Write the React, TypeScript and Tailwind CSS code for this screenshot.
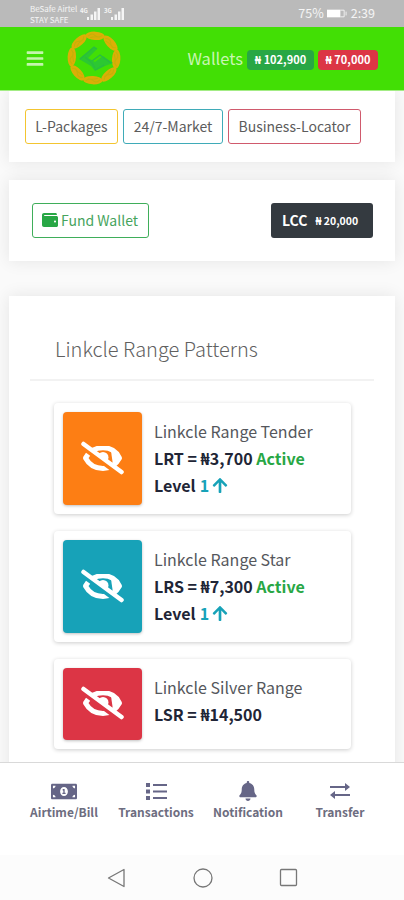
import type { ReactNode } from "react"
import { FaArrowUp, FaBars, FaBell, FaMoneyBillAlt, FaWallet } from "react-icons/fa"

const RANGES = [
  { name: "Linkcle Range Tender", code: "LRT", price: "3,700", level: 1, tile: "bg-[#fd7e14]" },
  { name: "Linkcle Range Star", code: "LRS", price: "7,300", level: 1, tile: "bg-[#17a2b8]" },
  { name: "Linkcle Silver Range", code: "LSR", price: "14,500", level: 0, tile: "bg-[#dc3545]" },
]

const CARD = "mx-[9px] bg-white shadow-[0_0_16px_rgba(0,0,0,0.09)]"

function Signal() {
  return (
    <svg viewBox="0 0 14 13" className="h-[13px] w-[14px] fill-white/85">
      <path d="M0 10h2v3H0zM3.5 7.5h2.5V13H3.5zM7 4.5h2.5V13H7zM10.5 1H13v12h-2.5z" />
    </svg>
  )
}

function StatusBar() {
  return (
    <div className="flex h-[27px] shrink-0 items-center bg-[#bababa] text-white/85">
      <div className="ml-[30px] w-[49px] whitespace-nowrap text-[8px] leading-[11px]">
        <div>BeSafe Airtel</div>
        <div>STAY SAFE</div>
      </div>
      <div className="ml-px flex items-start">
        <span className="w-[7px] text-[6px] leading-[8px] font-bold">4G</span>
        <Signal />
        <span className="ml-[3px] w-[7px] text-[6px] leading-[8px] font-bold">3G</span>
        <Signal />
      </div>
      <div className="mr-[29px] ml-auto flex items-center text-[12.5px] leading-none">
        <span>75%</span>
        <svg viewBox="0 0 22 9" className="mx-[3px] h-[9px] w-[21px]">
          <rect x="0" y="0.5" width="14" height="8" fill="white" />
          <path d="M14 1h4v7h-4M20 2.5v4" fill="none" stroke="white" strokeOpacity=".8" />
        </svg>
        <span>2:39</span>
      </div>
    </div>
  )
}

function Logo() {
  return (
    <svg viewBox="0 0 54 56" className="h-[56px] w-[54px]">
      {[0, 45, 90, 135, 180, 225, 270, 315].map((angle) => (
        <g key={angle} transform={`rotate(${angle + 3} 27 28)`}>
          <ellipse cx="27" cy="5.8" rx="9.6" ry="4.2" fill="#dcae06" />
          <path d="M20 6.5q3.5-4 7-1t7-.5M22 8q5-2 10-1" fill="none" stroke="#c4b207" strokeWidth="1" />
        </g>
      ))}
      <path d="M12 29l15-12 3 2-9 9 7 4 8-6 10 7-8 3-10 5-4-5z" fill="#2cc832" />
      <path d="M13 29l14-12 3 2M25 31l8-6 11 8M28 40l9-5M18 27l7 6 3 5" fill="none" stroke="#2abc42" strokeWidth="1.2" />
    </svg>
  )
}

function EyeOff() {
  return (
    <svg viewBox="0 0 43 34" className="h-[34px] w-[43px]">
      <mask id="eye-cut">
        <rect width="43" height="34" fill="white" />
        <path d="M-1 4.5L39 34" stroke="black" strokeWidth="4.5" />
      </mask>
      <g mask="url(#eye-cut)">
        <path
          d="M4.5 17C8 10.500 14 6.800 22 6.800S35.500 10.500 38.500 17C35 23.500 29.500 27.500 22 27.500S8 23.500 4.500 17z"
          fill="none"
          stroke="white"
          strokeWidth="5"
          strokeLinejoin="round"
        />
        <path d="M30 10l8 7-6 7z" fill="white" />
        <circle cx="22" cy="16.500" r="5.500" fill="white" />
      </g>
      <path d="M2.500 3L40.500 31" stroke="white" strokeWidth="4.500" strokeLinecap="round" />
    </svg>
  )
}

function Header() {
  return (
    <header className="relative z-10 flex h-[64px] shrink-0 items-center border-b border-[#a3ec85] bg-[#42df05] pb-px">
      <FaBars className="ml-[26px] h-[19px] w-[18px] text-[#c5f5ae]" />
      <div className="ml-[23px]">
        <Logo />
      </div>
      <div className="mr-[26px] ml-auto flex items-center gap-1 whitespace-nowrap">
        <span className="text-[16.5px] text-[#c8f6b3]">Wallets</span>
        <span className="mt-[3px] flex h-[20px] w-[67px] items-center justify-center rounded bg-[#28a745] text-[11px] font-bold text-white">
          ₦ 102,900
        </span>
        <span className="mt-[3px] flex h-[20px] w-[60px] items-center justify-center rounded bg-[#dc3545] text-[11px] font-bold text-white">
          ₦ 70,000
        </span>
      </div>
    </header>
  )
}

function RangeCard({ name, code, price, level, tile }: (typeof RANGES)[number]) {
  return (
    <div
      className={`flex w-[297px] rounded bg-white p-[9px] shadow-[0_1px_4px_rgba(0,0,0,0.2)] ${level ? "h-[111px]" : "h-[90px]"}`}
    >
      <div className={`flex w-[79px] items-center justify-center rounded pb-[2px] shadow-[0_1px_3px_rgba(0,0,0,0.25)] ${tile}`}>
        <EyeOff />
      </div>
      <div className="ml-3 pt-[5.5px] text-[16px] leading-[27px] font-bold whitespace-nowrap text-[#212536]">
        <div className="font-normal text-[#55575c]">{name}</div>
        <div>
          {code} = ₦{price} {level > 0 && <span className="text-[#28a745]">Active</span>}
        </div>
        {level > 0 && (
          <div className="flex items-center">
            Level <span className="ml-1 text-[#17a2b8]">{level}</span>
            <FaArrowUp className="ml-[3px] h-[17px] w-[16px] text-[#17a2b8]" />
          </div>
        )}
      </div>
    </div>
  )
}

function Tab({ icon, label }: { icon: ReactNode; label: string }) {
  return (
    <div className="flex w-[92px] flex-col items-center text-[#666687]">
      <div className="flex h-[22px] items-center">{icon}</div>
      <div className="text-[12px] leading-[20px] font-bold whitespace-nowrap text-[#6d6d80]">{label}</div>
    </div>
  )
}

export default function App() {
  return (
    <div className="flex h-[900px] w-[404px] flex-col overflow-hidden bg-[#fafafa] font-['Noto_Sans_CJK_SC','Noto_Sans',sans-serif]">
      <StatusBar />
      <Header />

      <main className="min-h-0 flex-1 overflow-hidden">
        <section className={`flex h-[71px] gap-[5px] pt-[18px] pl-4 text-[14px] text-[#5c5c5c] ${CARD}`}>
          <button className="h-[35px] w-[93px] rounded-[3px] border border-[#f3c530]">L-Packages</button>
          <button className="h-[35px] w-[100px] rounded-[3px] border border-[#3fabb8]">24/7-Market</button>
          <button className="h-[35px] w-[133px] rounded-[3px] border border-[#d05a6d]">Business-Locator</button>
        </section>

        <section className={`mt-[18px] flex h-[81px] items-center justify-between pr-[22px] pl-[23px] ${CARD}`}>
          <button className="flex h-[35px] w-[117px] items-center justify-center gap-[3px] rounded-[3px] border border-[#3fae5a] pr-px pb-px text-[14px] text-[#46a45d]">
            <FaWallet className="size-[16px] text-[#28a745]" />
            Fund Wallet
          </button>
          <button className="flex h-[35px] w-[102px] items-center gap-2 rounded-[3px] bg-[#343a40] pl-[11px] font-bold text-white">
            <span className="text-[14px]">LCC</span>
            <span className="text-[10.5px]">₦ 20,000</span>
          </button>
        </section>

        <section className={`mt-[35px] h-[600px] px-[21px] pt-[36px] ${CARD}`}>
          <h2 className="pl-[25px] text-[20px] leading-[34px] font-light text-[#606060]">Linkcle Range Patterns</h2>
          <div className="mt-[13px] h-[2px] bg-[#f2f2f2]" />
          <div className="mt-[22px] ml-6 flex flex-col gap-[17px]">
            {RANGES.map((range) => (
              <RangeCard key={range.code} {...range} />
            ))}
          </div>
        </section>
      </main>

      <nav className="relative flex h-[93px] shrink-0 border-t border-[#d9d9d9] bg-white pt-[17px] pl-[18px]">
        <Tab icon={<FaMoneyBillAlt className="h-[21px] w-[26px]" />} label="Airtime/Bill" />
        <Tab
          icon={
            <svg viewBox="0 0 21 17" className="h-[17px] w-[21px]" fill="currentColor">
              <path d="M0 0h4v4H0zM0 6.5h4v4H0zM0 13h4v4H0zM7 1h14v2H7zM7 7.5h14v2H7zM7 14h14v2H7z" />
            </svg>
          }
          label="Transactions"
        />
        <Tab icon={<FaBell className="h-[20px] w-[18px]" />} label="Notification" />
        <Tab
          icon={
            <svg viewBox="0 0 20 16" className="h-4 w-5">
              <path d="M0 4h15M5 12h15" stroke="currentColor" strokeWidth="2.2" />
              <path d="M15 0l5 4-5 4zM5 8l-5 4 5 4z" fill="currentColor" />
            </svg>
          }
          label="Transfer"
        />
      </nav>

      {/* System navigation keys */}
      <div className="flex h-[45px] shrink-0 items-center bg-[#fcfcfc] pl-[107px]">
        <svg viewBox="0 0 19 20" className="h-5 w-[19px] fill-none stroke-[#777] stroke-[1.3]">
          <path d="M17 1.5v17L1.5 10z" strokeLinejoin="round" />
        </svg>
        <svg viewBox="0 0 20 20" className="ml-[67px] size-5 fill-none stroke-[#777] stroke-[1.3]">
          <circle cx="10" cy="10" r="9" />
        </svg>
        <svg viewBox="0 0 20 20" className="ml-[66px] size-5 fill-none stroke-[#777] stroke-[1.3]">
          <rect x="1.5" y="1.5" width="16" height="16" rx="1" />
        </svg>
      </div>
    </div>
  )
}
